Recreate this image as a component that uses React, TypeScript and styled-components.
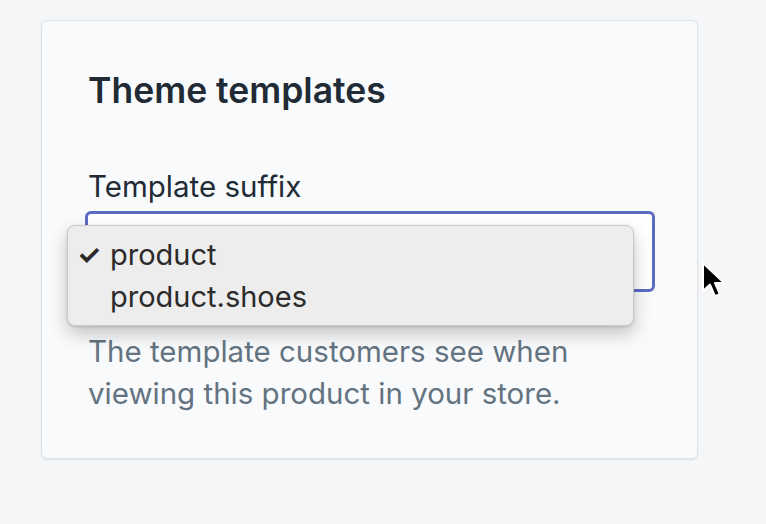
import React from 'react';
import styled, { createGlobalStyle } from 'styled-components';

const GlobalStyle = createGlobalStyle`
  html, body {
    margin: 0;
    padding: 0;
    background: #f4f6f8;
  }
  body {
    font-family: Inter, "Noto Sans", "Liberation Sans", sans-serif;
    -webkit-font-smoothing: antialiased;
  }
`;

const Page = styled.div`
  position: relative;
  width: 766px;
  height: 524px;
  box-sizing: border-box;
  padding: 20px 0 0 41px;
  background: #f4f6f8;
  overflow: hidden;
`;

const Card = styled.section`
  width: 657px;
  box-sizing: border-box;
  padding: 50px 43px 44px 46px;
  background: #f9fafb;
  border: 1px solid #dfe3e8;
  border-radius: 6px;
  box-shadow: 0 1px 2px rgba(63, 63, 68, 0.12);
  display: flex;
  flex-direction: column;
`;

const Title = styled.h2`
  margin: 0 0 57px;
  font-size: 35.5px;
  line-height: 40px;
  font-weight: 600;
  color: #212b36;
`;

const Label = styled.label`
  display: block;
  font-size: 29.5px;
  line-height: 36px;
  color: #212b36;
  margin-bottom: 7px;
`;

const Field = styled.div`
  position: relative;
`;

const SelectBox = styled.div`
  height: 81px;
  margin: 0 -1px 0 -3px;
  box-sizing: border-box;
  border: 3px solid #5c6ac4;
  border-radius: 6px;
  background: #ffffff;
`;

const Menu = styled.ul`
  position: absolute;
  top: 14px;
  left: -21px;
  width: 567px;
  height: 101px;
  box-sizing: border-box;
  margin: 0;
  padding: 8px 0 0;
  list-style: none;
  background: #ededed;
  border: 1px solid #c9c9c9;
  border-radius: 8px;
  box-shadow: 0 8px 18px rgba(0, 0, 0, 0.22), 0 1px 3px rgba(0, 0, 0, 0.12);
  z-index: 2;
`;

const MenuItem = styled.li`
  position: relative;
  padding-left: 42px;
  font-size: 29px;
  line-height: 42px;
  color: #2b2b2b;
`;

const Check = styled.span`
  position: absolute;
  left: 9px;
  top: 0;
  font-size: 27px;
  font-weight: 700;
`;

const HelpText = styled.p`
  margin: 38px 0 0;
  max-width: 520px;
  font-size: 29.5px;
  line-height: 42px;
  color: #637381;
`;

const Cursor = styled.svg`
  position: absolute;
  left: 701px;
  top: 261px;
  width: 26px;
  height: 38px;
`;

const options = [
  { value: 'product', checked: true },
  { value: 'product.shoes', checked: false },
];

export default function App() {
  return (
    <>
      <GlobalStyle />
      <Page>
        <Card>
          <Title>Theme templates</Title>
          <Label>Template suffix</Label>
          <Field>
            <SelectBox />
            <Menu>
              {options.map((o) => (
                <MenuItem key={o.value}>
                  {o.checked && <Check>✓</Check>}
                  {o.value}
                </MenuItem>
              ))}
            </Menu>
          </Field>
          <HelpText>
            The template customers see when viewing this product in your store.
          </HelpText>
        </Card>
        <Cursor viewBox="0 0 13 19">
          <path
            d="M1 1 L1 15 L4.5 11.8 L7 17.6 L9.4 16.6 L7 11 L11.6 11 Z"
            fill="#000"
            stroke="#fff"
            strokeWidth="1"
            strokeLinejoin="round"
          />
        </Cursor>
      </Page>
    </>
  );
}
